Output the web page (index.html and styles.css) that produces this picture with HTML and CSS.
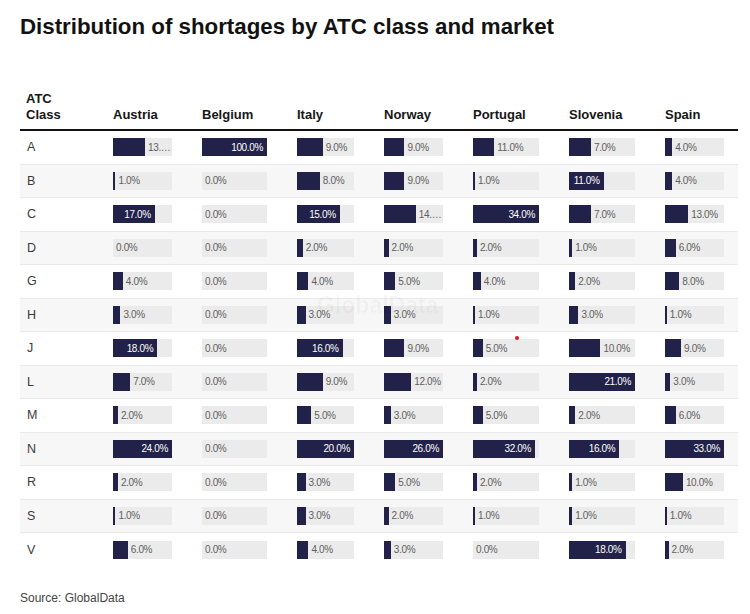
FILE: index.html
```html
<!DOCTYPE html>
<html lang="en">
<head>
<meta charset="utf-8">
<title>Distribution of shortages by ATC class and market</title>
<link rel="stylesheet" href="styles.css">
</head>
<body>
<div class="chart">
  <h1 class="title">Distribution of shortages by ATC class and market</h1>
  <div class="table">
    <div class="row head">
      <div class="hcell">ATC<br>Class</div>
      <div class="hcell">Austria</div>
      <div class="hcell">Belgium</div>
      <div class="hcell">Italy</div>
      <div class="hcell">Norway</div>
      <div class="hcell">Portugal</div>
      <div class="hcell">Slovenia</div>
      <div class="hcell">Spain</div>
    </div>

    <div class="row">
      <div class="cls">A</div>
      <div class="track"><div class="bar" style="width:54.17%"></div><span class="lbl">13.0%</span></div>
      <div class="track"><div class="bar in" style="width:100%"><span>100.0%</span></div></div>
      <div class="track"><div class="bar" style="width:45%"></div><span class="lbl">9.0%</span></div>
      <div class="track"><div class="bar" style="width:34.62%"></div><span class="lbl">9.0%</span></div>
      <div class="track"><div class="bar" style="width:32.35%"></div><span class="lbl">11.0%</span></div>
      <div class="track"><div class="bar" style="width:33.33%"></div><span class="lbl">7.0%</span></div>
      <div class="track"><div class="bar" style="width:12.12%"></div><span class="lbl">4.0%</span></div>
    </div>

    <div class="row alt">
      <div class="cls">B</div>
      <div class="track"><div class="bar" style="width:4.17%"></div><span class="lbl">1.0%</span></div>
      <div class="track"><div class="bar" style="width:0%"></div><span class="lbl">0.0%</span></div>
      <div class="track"><div class="bar" style="width:40%"></div><span class="lbl">8.0%</span></div>
      <div class="track"><div class="bar" style="width:34.62%"></div><span class="lbl">9.0%</span></div>
      <div class="track"><div class="bar" style="width:2.94%"></div><span class="lbl">1.0%</span></div>
      <div class="track"><div class="bar in" style="width:52.38%"><span>11.0%</span></div></div>
      <div class="track"><div class="bar" style="width:12.12%"></div><span class="lbl">4.0%</span></div>
    </div>

    <div class="row">
      <div class="cls">C</div>
      <div class="track"><div class="bar in" style="width:70.83%"><span>17.0%</span></div></div>
      <div class="track"><div class="bar" style="width:0%"></div><span class="lbl">0.0%</span></div>
      <div class="track"><div class="bar in" style="width:75%"><span>15.0%</span></div></div>
      <div class="track"><div class="bar" style="width:53.85%"></div><span class="lbl">14.0%</span></div>
      <div class="track"><div class="bar in" style="width:100%"><span>34.0%</span></div></div>
      <div class="track"><div class="bar" style="width:33.33%"></div><span class="lbl">7.0%</span></div>
      <div class="track"><div class="bar" style="width:39.39%"></div><span class="lbl">13.0%</span></div>
    </div>

    <div class="row alt">
      <div class="cls">D</div>
      <div class="track"><div class="bar" style="width:0%"></div><span class="lbl">0.0%</span></div>
      <div class="track"><div class="bar" style="width:0%"></div><span class="lbl">0.0%</span></div>
      <div class="track"><div class="bar" style="width:10%"></div><span class="lbl">2.0%</span></div>
      <div class="track"><div class="bar" style="width:7.69%"></div><span class="lbl">2.0%</span></div>
      <div class="track"><div class="bar" style="width:5.88%"></div><span class="lbl">2.0%</span></div>
      <div class="track"><div class="bar" style="width:4.76%"></div><span class="lbl">1.0%</span></div>
      <div class="track"><div class="bar" style="width:18.18%"></div><span class="lbl">6.0%</span></div>
    </div>

    <div class="row">
      <div class="cls">G</div>
      <div class="track"><div class="bar" style="width:16.67%"></div><span class="lbl">4.0%</span></div>
      <div class="track"><div class="bar" style="width:0%"></div><span class="lbl">0.0%</span></div>
      <div class="track"><div class="bar" style="width:20%"></div><span class="lbl">4.0%</span></div>
      <div class="track"><div class="bar" style="width:19.23%"></div><span class="lbl">5.0%</span></div>
      <div class="track"><div class="bar" style="width:11.76%"></div><span class="lbl">4.0%</span></div>
      <div class="track"><div class="bar" style="width:9.52%"></div><span class="lbl">2.0%</span></div>
      <div class="track"><div class="bar" style="width:24.24%"></div><span class="lbl">8.0%</span></div>
    </div>

    <div class="row alt">
      <div class="cls">H</div>
      <div class="track"><div class="bar" style="width:12.5%"></div><span class="lbl">3.0%</span></div>
      <div class="track"><div class="bar" style="width:0%"></div><span class="lbl">0.0%</span></div>
      <div class="track"><div class="bar" style="width:15%"></div><span class="lbl">3.0%</span></div>
      <div class="track"><div class="bar" style="width:11.54%"></div><span class="lbl">3.0%</span></div>
      <div class="track"><div class="bar" style="width:2.94%"></div><span class="lbl">1.0%</span></div>
      <div class="track"><div class="bar" style="width:14.29%"></div><span class="lbl">3.0%</span></div>
      <div class="track"><div class="bar" style="width:3.03%"></div><span class="lbl">1.0%</span></div>
    </div>

    <div class="row">
      <div class="cls">J</div>
      <div class="track"><div class="bar in" style="width:75%"><span>18.0%</span></div></div>
      <div class="track"><div class="bar" style="width:0%"></div><span class="lbl">0.0%</span></div>
      <div class="track"><div class="bar in" style="width:80%"><span>16.0%</span></div></div>
      <div class="track"><div class="bar" style="width:34.62%"></div><span class="lbl">9.0%</span></div>
      <div class="track"><div class="bar" style="width:14.71%"></div><span class="lbl">5.0%</span></div>
      <div class="track"><div class="bar" style="width:47.62%"></div><span class="lbl">10.0%</span></div>
      <div class="track"><div class="bar" style="width:27.27%"></div><span class="lbl">9.0%</span></div>
    </div>

    <div class="row alt">
      <div class="cls">L</div>
      <div class="track"><div class="bar" style="width:29.17%"></div><span class="lbl">7.0%</span></div>
      <div class="track"><div class="bar" style="width:0%"></div><span class="lbl">0.0%</span></div>
      <div class="track"><div class="bar" style="width:45%"></div><span class="lbl">9.0%</span></div>
      <div class="track"><div class="bar" style="width:46.15%"></div><span class="lbl">12.0%</span></div>
      <div class="track"><div class="bar" style="width:5.88%"></div><span class="lbl">2.0%</span></div>
      <div class="track"><div class="bar in" style="width:100%"><span>21.0%</span></div></div>
      <div class="track"><div class="bar" style="width:9.09%"></div><span class="lbl">3.0%</span></div>
    </div>

    <div class="row">
      <div class="cls">M</div>
      <div class="track"><div class="bar" style="width:8.33%"></div><span class="lbl">2.0%</span></div>
      <div class="track"><div class="bar" style="width:0%"></div><span class="lbl">0.0%</span></div>
      <div class="track"><div class="bar" style="width:25%"></div><span class="lbl">5.0%</span></div>
      <div class="track"><div class="bar" style="width:11.54%"></div><span class="lbl">3.0%</span></div>
      <div class="track"><div class="bar" style="width:14.71%"></div><span class="lbl">5.0%</span></div>
      <div class="track"><div class="bar" style="width:9.52%"></div><span class="lbl">2.0%</span></div>
      <div class="track"><div class="bar" style="width:18.18%"></div><span class="lbl">6.0%</span></div>
    </div>

    <div class="row alt">
      <div class="cls">N</div>
      <div class="track"><div class="bar in" style="width:100%"><span>24.0%</span></div></div>
      <div class="track"><div class="bar" style="width:0%"></div><span class="lbl">0.0%</span></div>
      <div class="track"><div class="bar in" style="width:100%"><span>20.0%</span></div></div>
      <div class="track"><div class="bar in" style="width:100%"><span>26.0%</span></div></div>
      <div class="track"><div class="bar in" style="width:94.12%"><span>32.0%</span></div></div>
      <div class="track"><div class="bar in" style="width:76.19%"><span>16.0%</span></div></div>
      <div class="track"><div class="bar in" style="width:100%"><span>33.0%</span></div></div>
    </div>

    <div class="row">
      <div class="cls">R</div>
      <div class="track"><div class="bar" style="width:8.33%"></div><span class="lbl">2.0%</span></div>
      <div class="track"><div class="bar" style="width:0%"></div><span class="lbl">0.0%</span></div>
      <div class="track"><div class="bar" style="width:15%"></div><span class="lbl">3.0%</span></div>
      <div class="track"><div class="bar" style="width:19.23%"></div><span class="lbl">5.0%</span></div>
      <div class="track"><div class="bar" style="width:5.88%"></div><span class="lbl">2.0%</span></div>
      <div class="track"><div class="bar" style="width:4.76%"></div><span class="lbl">1.0%</span></div>
      <div class="track"><div class="bar" style="width:30.3%"></div><span class="lbl">10.0%</span></div>
    </div>

    <div class="row alt">
      <div class="cls">S</div>
      <div class="track"><div class="bar" style="width:4.17%"></div><span class="lbl">1.0%</span></div>
      <div class="track"><div class="bar" style="width:0%"></div><span class="lbl">0.0%</span></div>
      <div class="track"><div class="bar" style="width:15%"></div><span class="lbl">3.0%</span></div>
      <div class="track"><div class="bar" style="width:7.69%"></div><span class="lbl">2.0%</span></div>
      <div class="track"><div class="bar" style="width:2.94%"></div><span class="lbl">1.0%</span></div>
      <div class="track"><div class="bar" style="width:4.76%"></div><span class="lbl">1.0%</span></div>
      <div class="track"><div class="bar" style="width:3.03%"></div><span class="lbl">1.0%</span></div>
    </div>

    <div class="row last">
      <div class="cls">V</div>
      <div class="track"><div class="bar" style="width:25%"></div><span class="lbl">6.0%</span></div>
      <div class="track"><div class="bar" style="width:0%"></div><span class="lbl">0.0%</span></div>
      <div class="track"><div class="bar" style="width:20%"></div><span class="lbl">4.0%</span></div>
      <div class="track"><div class="bar" style="width:11.54%"></div><span class="lbl">3.0%</span></div>
      <div class="track"><div class="bar" style="width:0%"></div><span class="lbl">0.0%</span></div>
      <div class="track"><div class="bar in" style="width:85.71%"><span>18.0%</span></div></div>
      <div class="track"><div class="bar" style="width:6.06%"></div><span class="lbl">2.0%</span></div>
    </div>

    <div class="watermark">GlobalData</div>
    <div class="dot"></div>
  </div>
  <p class="source">Source: GlobalData</p>
</div>
</body>
</html>
```

FILE: styles.css
```css
* { box-sizing: border-box; }

html, body {
  margin: 0;
  padding: 0;
  background: #ffffff;
}

body {
  font-family: "Liberation Sans", Arial, sans-serif;
  color: #1a1a1a;
}

.chart {
  padding: 0 12px 0 20px;
}

.title {
  margin: 14px 0 0;
  font-size: 22.3px;
  line-height: 26px;
  font-weight: 700;
  color: #121212;
}

.table {
  position: relative;
  margin-top: 51px;
  width: 718px;
}

.row {
  display: grid;
  grid-template-columns: 56px 59px 65px 57px 59px 66px 66px 59px;
  column-gap: 30px;
  padding: 0 14px 0 7px;
  height: 33.5px;
  align-items: center;
  border-bottom: 1px solid #e9e9e9;
}

.row.alt { background: #f7f7f7; }
.row.last { border-bottom: none; }

.row.head {
  height: auto;
  align-items: end;
  padding-bottom: 6px;
  border-bottom: 2px solid #111;
}

.hcell {
  font-size: 13px;
  line-height: 16px;
  font-weight: 700;
  color: #161616;
}

.row.head .hcell:first-child { margin-left: -1px; }

.cls {
  font-size: 12.5px;
  color: #3a3a3a;
}

.track {
  display: flex;
  align-items: center;
  height: 18px;
  background: #ebebeb;
  overflow: hidden;
}

.bar {
  height: 18px;
  background: #212149;
  flex: none;
}

.bar.in {
  display: flex;
  align-items: center;
  justify-content: flex-end;
  padding-right: 4px;
}

.bar.in span {
  font-size: 10px;
  letter-spacing: -0.35px;
  color: #ffffff;
  white-space: nowrap;
}

.lbl {
  flex: 1;
  min-width: 0;
  padding-left: 3px;
  font-size: 10px;
  letter-spacing: -0.35px;
  color: #5e5e5e;
  white-space: nowrap;
  overflow: hidden;
  text-overflow: ellipsis;
}

.watermark {
  position: absolute;
  left: 297px;
  top: 201px;
  font-size: 23px;
  font-weight: 700;
  color: rgba(0, 0, 0, 0.03);
  pointer-events: none;
}

.dot {
  position: absolute;
  left: 495px;
  top: 245px;
  width: 4px;
  height: 4px;
  border-radius: 50%;
  background: #e0191c;
}

.source {
  margin: 24px 0 0;
  font-size: 12px;
  line-height: 14px;
  color: #444;
}
```
